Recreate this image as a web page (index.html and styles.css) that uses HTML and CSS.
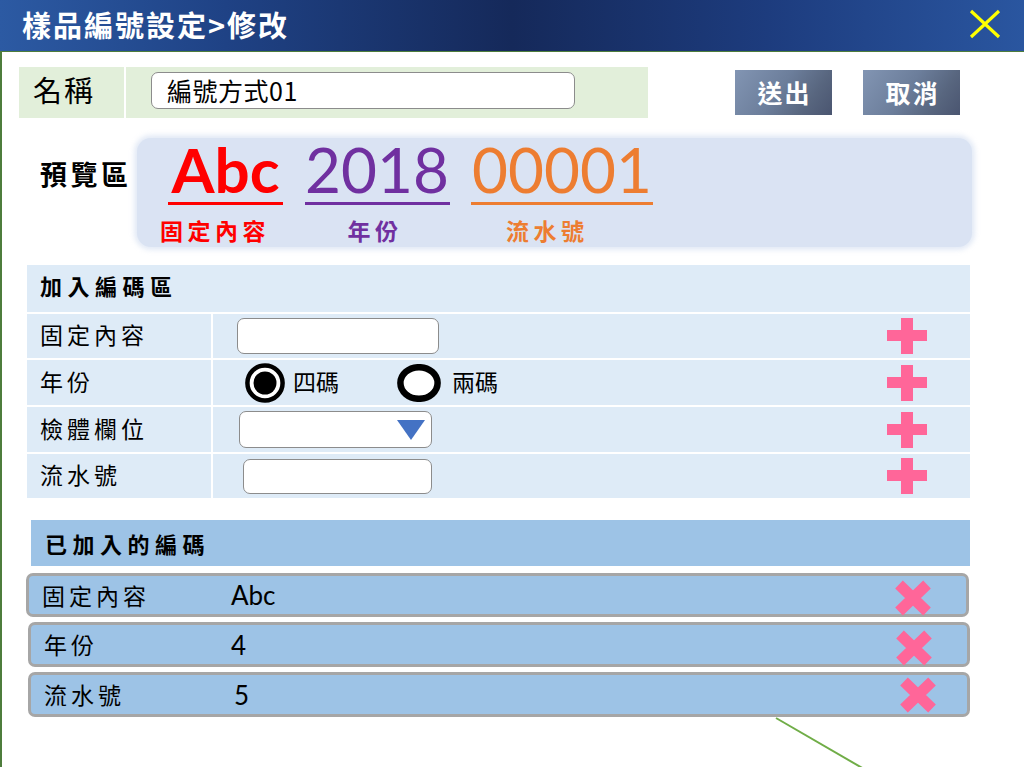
FILE: index.html
```html
<!DOCTYPE html>
<html lang="zh-Hant">
<head>
<meta charset="utf-8">
<title>樣品編號設定</title>
<link rel="stylesheet" href="styles.css">
</head>
<body>
<header class="titlebar">
  <h1 class="title">樣品編號設定&gt;修改</h1>
  <button class="close" aria-label="關閉">
    <svg width="34" height="32" viewBox="0 0 34 32"><path d="M3 3 L31 29 M31 3 L3 29" stroke="#ffff00" stroke-width="3.2" fill="none"/></svg>
  </button>
</header>
<main class="main">
  <section class="name-row">
    <div class="name-box">
      <div class="name-label">名稱</div>
      <div class="name-field"><div class="text-input name-input">編號方式01</div></div>
    </div>
    <div class="actions">
      <button class="btn">送出</button>
      <button class="btn">取消</button>
    </div>
  </section>

  <section class="preview-row">
    <div class="preview-label">預覽區</div>
    <div class="preview-box">
      <div class="pv pv-red"><span class="pv-big pv-bold">Abc</span><span class="pv-line"></span><span class="pv-cap">固定內容</span></div>
      <div class="pv pv-purple"><span class="pv-big">2018</span><span class="pv-line"></span><span class="pv-cap">年份</span></div>
      <div class="pv pv-orange"><span class="pv-big">00001</span><span class="pv-line"></span><span class="pv-cap">流水號</span></div>
    </div>
  </section>

  <section class="add">
    <div class="add-head">加入編碼區</div>

    <div class="add-label">固定內容</div>
    <div class="add-cell">
      <div class="text-input in-fixed"></div>
      <svg class="plus" width="40" height="36" viewBox="0 0 40 36"><rect x="14" y="0" width="12" height="36" fill="#ff6699"/><rect x="0" y="12" width="40" height="11" fill="#ff6699"/></svg>
    </div>

    <div class="add-label">年份</div>
    <div class="add-cell">
      <svg class="radio-on" width="40" height="40" viewBox="0 0 40 40"><circle cx="20" cy="20" r="17.6" fill="#fff" stroke="#000" stroke-width="4.5"/><circle cx="20" cy="20" r="11.5" fill="#000"/></svg>
      <span class="radio-text r4">四碼</span>
      <svg class="radio-off" width="44" height="38" viewBox="0 0 44 38"><ellipse cx="22" cy="19" rx="18.6" ry="15.8" fill="#fff" stroke="#000" stroke-width="6.5"/></svg>
      <span class="radio-text r2">兩碼</span>
      <svg class="plus" width="40" height="36" viewBox="0 0 40 36"><rect x="14" y="0" width="12" height="36" fill="#ff6699"/><rect x="0" y="12" width="40" height="11" fill="#ff6699"/></svg>
    </div>

    <div class="add-label">檢體欄位</div>
    <div class="add-cell">
      <div class="select">
        <svg width="28" height="20" viewBox="0 0 28 20"><polygon points="0,0 28,0 14,20" fill="#4472c4"/></svg>
      </div>
      <svg class="plus" width="40" height="36" viewBox="0 0 40 36"><rect x="14" y="0" width="12" height="36" fill="#ff6699"/><rect x="0" y="12" width="40" height="11" fill="#ff6699"/></svg>
    </div>

    <div class="add-label">流水號</div>
    <div class="add-cell">
      <div class="text-input in-serial"></div>
      <svg class="plus" width="40" height="36" viewBox="0 0 40 36"><rect x="14" y="0" width="12" height="36" fill="#ff6699"/><rect x="0" y="12" width="40" height="11" fill="#ff6699"/></svg>
    </div>
  </section>

  <section class="added">
    <div class="added-head">已加入的編碼</div>
    <div class="added-list">
      <div class="added-row r-first">
        <span class="added-label">固定內容</span><span class="added-value">Abc</span>
        <svg class="del" width="38" height="36" viewBox="0 0 38 36"><path d="M5 4.5 L33 31.5 M33 4.5 L5 31.5" stroke="#ff6699" stroke-width="11" fill="none"/></svg>
      </div>
      <div class="added-row">
        <span class="added-label">年份</span><span class="added-value">4</span>
        <svg class="del" width="38" height="36" viewBox="0 0 38 36"><path d="M5 4.5 L33 31.5 M33 4.5 L5 31.5" stroke="#ff6699" stroke-width="11" fill="none"/></svg>
      </div>
      <div class="added-row">
        <span class="added-label">流水號</span><span class="added-value v5">5</span>
        <svg class="del del-up" width="38" height="36" viewBox="0 0 38 36"><path d="M5 4.5 L33 31.5 M33 4.5 L5 31.5" stroke="#ff6699" stroke-width="11" fill="none"/></svg>
      </div>
    </div>
  </section>

  <svg class="deco-line" width="92" height="54" viewBox="0 0 92 54"><line x1="1" y1="1" x2="89" y2="52" stroke="#70ad47" stroke-width="2"/></svg>
</main>
</body>
</html>
```

FILE: styles.css
```css
* { box-sizing: border-box; }

html, body {
  margin: 0;
  padding: 0;
  width: 1024px;
  height: 767px;
  overflow: hidden;
  background: #ffffff;
  font-family: "Noto Sans CJK TC", "Noto Sans", sans-serif;
  color: #000;
}

/* ---------- title bar ---------- */
.titlebar {
  height: 52px;
  border-bottom: 1px solid #4e7d3c;
  background: linear-gradient(90deg, #2c5aa3 0%, #1f4285 22%, #15295a 50%, #1d3c7e 75%, #2a56a0 100%);
  display: flex;
  align-items: center;
  justify-content: space-between;
  padding: 0 22px 0 22px;
}

.title {
  margin: 0;
  color: #ffffff;
  font-size: 29px;
  font-weight: 700;
  letter-spacing: 2px;
  line-height: 1;
  padding-bottom: 2px;
}

.close {
  border: 0;
  background: none;
  padding: 0;
  width: 34px;
  height: 32px;
  margin-top: -4px;
  display: flex;
}

/* ---------- main ---------- */
.main {
  position: relative;
  height: 715px;
  border-left: 2px solid #4e7d3c;
  padding-top: 15px;
}

/* name row */
.name-row {
  display: flex;
  align-items: flex-start;
  margin-left: 17px;
}

.name-box {
  width: 629px;
  height: 51px;
  background: #e2efda;
  display: flex;
}

.name-label {
  width: 107px;
  border-right: 2px solid #ffffff;
  padding-left: 14px;
  font-size: 29px;
  letter-spacing: 2px;
  display: flex;
  align-items: center;
  padding-bottom: 7px;
}

.name-field {
  padding-left: 25px;
  padding-top: 5px;
}

.text-input {
  background: #ffffff;
  border: 1.5px solid #8c8c8c;
  border-radius: 7px;
}

.name-input {
  width: 424px;
  height: 37px;
  font-size: 25px;
  letter-spacing: 0.5px;
  line-height: 34px;
  padding-left: 15px;
}

.actions {
  display: flex;
  gap: 31px;
  margin-left: 87px;
  margin-top: 3px;
}

.btn {
  width: 97px;
  height: 45px;
  border: 0;
  padding: 0 0 0 2px;
  background: linear-gradient(125deg, #8295b3 0%, #6c7e9b 45%, #58667f 75%, #4a5570 100%);
  color: #ffffff;
  font-family: "Noto Sans CJK TC", sans-serif;
  font-size: 25px;
  font-weight: 700;
  letter-spacing: 2px;
  line-height: 1;
}

/* preview */
.preview-row {
  display: flex;
  align-items: flex-start;
  margin-top: 20px;
}

.preview-label {
  width: 135px;
  padding-left: 38px;
  padding-top: 21px;
  font-size: 27px;
  font-weight: 700;
  letter-spacing: 3.5px;
  line-height: 30px;
}

.preview-box {
  width: 835px;
  height: 109px;
  background: #dae3f3;
  border-radius: 14px;
  box-shadow: 0 0 5px 3px rgba(218, 227, 243, 0.75);
  padding-left: 31px;
  display: flex;
  gap: 21.5px;
}

.pv {
  display: flex;
  flex-direction: column;
}

.pv-red { width: 115px; color: #ff0000; }
.pv-purple { width: 145px; color: #7030a0; }
.pv-orange { width: 182px; color: #ed7d31; }

.pv-big {
  font-family: Lato, "Noto Sans", sans-serif;
  font-size: 62px;
  line-height: 62px;
  text-align: center;
  white-space: nowrap;
}

.pv-bold { font-weight: 700; }

.pv-line {
  height: 3px;
  margin-top: 2px;
  background: currentColor;
}

.pv-cap {
  margin-top: 12px;
  font-size: 23px;
  font-weight: 700;
  letter-spacing: 4.5px;
  line-height: 26px;
  white-space: nowrap;
}

.pv-red .pv-cap { margin-left: -8px; }
.pv-purple .pv-cap { margin-left: 43px; }
.pv-orange .pv-cap { margin-left: 35px; }

/* add section */
.add {
  margin: 18px 0 0 25px;
  width: 943px;
  display: grid;
  grid-template-columns: 184px 1fr;
  grid-template-rows: 47px 44px 45px 45px 44px;
  gap: 2px;
}

.add-head {
  grid-column: 1 / -1;
  background: #deebf7;
  padding-left: 13px;
  padding-bottom: 7px;
  font-size: 22px;
  font-weight: 700;
  letter-spacing: 5.5px;
  display: flex;
  align-items: center;
}

.add-label {
  background: #deebf7;
  padding-left: 13px;
  padding-bottom: 4px;
  font-size: 23px;
  letter-spacing: 4px;
  display: flex;
  align-items: center;
}

.add-cell {
  background: #deebf7;
  display: flex;
  align-items: center;
}

.plus {
  margin-left: auto;
  margin-right: 43px;
  flex: none;
}

.in-fixed {
  width: 202px;
  height: 36px;
  margin-left: 24px;
}

.in-serial {
  width: 189px;
  height: 35px;
  margin-left: 30px;
}

.radio-on { margin-left: 32px; flex: none; }
.radio-off { margin-left: 58px; flex: none; }

.radio-text {
  font-size: 23px;
  line-height: 1;
  padding-bottom: 2px;
}

.r4 { margin-left: 8px; }
.r2 { margin-left: 11px; }

.select {
  width: 193px;
  height: 37px;
  margin-left: 26px;
  background: #ffffff;
  border: 1.5px solid #8c8c8c;
  border-radius: 7px;
  display: flex;
  align-items: center;
  justify-content: flex-end;
  padding-right: 6px;
}

/* added section */
.added {
  margin: 22px 0 0 26px;
  width: 942px;
}

.added-head {
  height: 46px;
  margin-left: 3px;
  background: #9dc3e6;
  padding-left: 14px;
  font-size: 22px;
  font-weight: 700;
  letter-spacing: 5.5px;
  display: flex;
  align-items: center;
}

.added-list {
  margin-top: 7px;
  display: flex;
  flex-direction: column;
  gap: 5px;
}

.added-row {
  height: 45px;
  background: #9dc3e6;
  border: 3px solid #a6a6a6;
  border-radius: 7px;
  display: flex;
  align-items: center;
}

.r-first { height: 44px; margin-left: -2px; margin-right: 1px; }

.added-label {
  width: 200px;
  padding-left: 13px;
  font-size: 23px;
  letter-spacing: 4px;
  line-height: 1;
  flex: none;
}

.r-first .added-label { width: 202px; }

.added-value {
  font-family: Lato, "Noto Sans", sans-serif;
  font-size: 26px;
  line-height: 1;
}

.v5 { margin-left: 3px; }

.del {
  margin-left: auto;
  margin-right: 34px;
  margin-top: 6px;
  flex: none;
}

.del-up { margin-top: 0; margin-right: 30px; }

.deco-line {
  position: absolute;
  left: 773px;
  top: 665px;
}
```
